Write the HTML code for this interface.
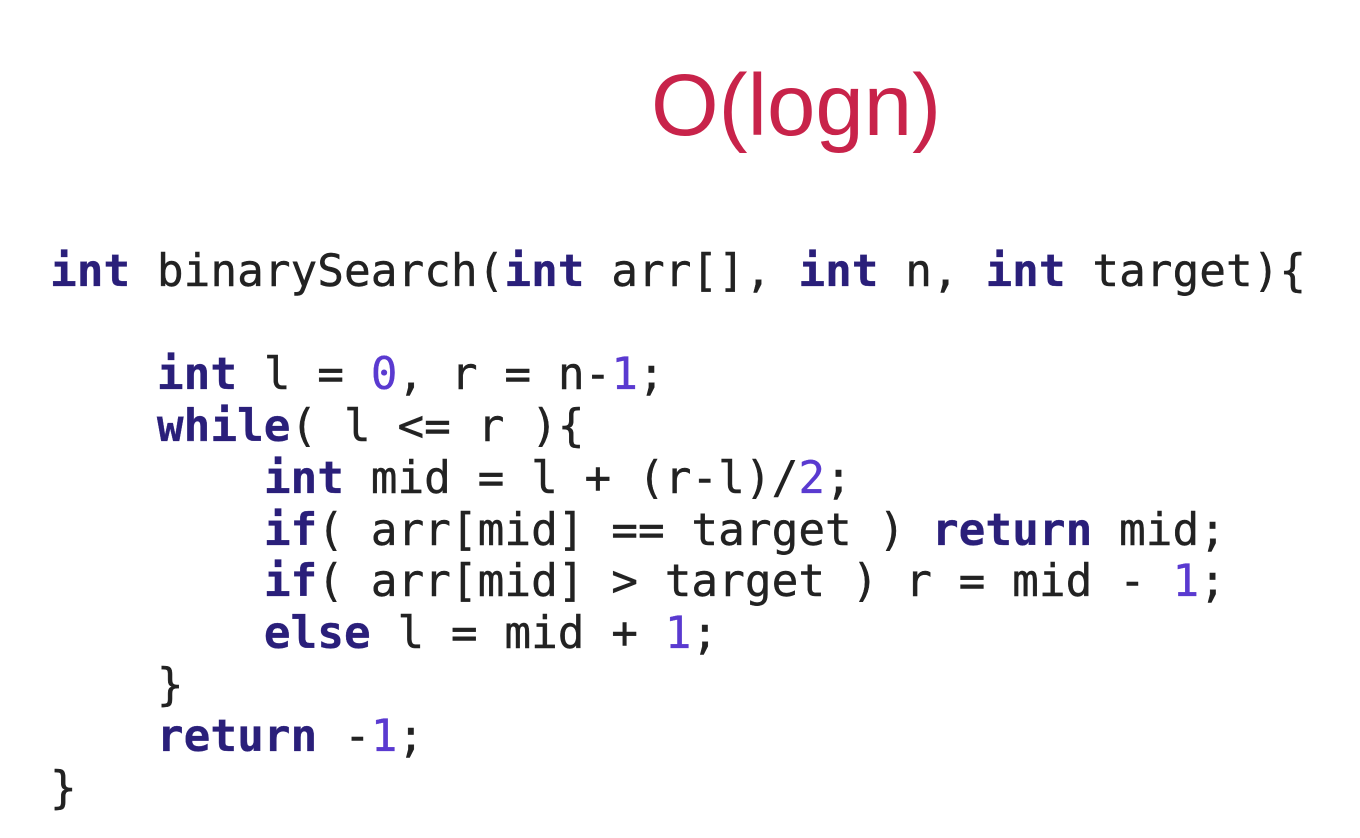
<!DOCTYPE html>
<html><head><meta charset="utf-8"><style>
html,body{margin:0;padding:0;background:#fff;width:1360px;height:838px;overflow:hidden}
.t{position:absolute;left:651px;top:62px;font-family:"Liberation Sans",sans-serif;font-size:87px;line-height:1;color:#c8234a;white-space:nowrap}
pre{position:absolute;left:50px;top:246px;margin:0;font-family:"DejaVu Sans Mono",monospace;font-size:44.4px;line-height:51.7px;color:#222;-webkit-text-stroke:0.4px #222}
b{color:#2a1f7a;-webkit-text-stroke:0.3px #2a1f7a}
i{font-style:normal;color:#5a3ad0;-webkit-text-stroke:0.3px #5a3ad0}
</style></head><body>
<div class="t">O(logn)</div>
<pre><b>int</b> binarySearch(<b>int</b> arr[], <b>int</b> n, <b>int</b> target){

    <b>int</b> l = <i>0</i>, r = n-<i>1</i>;
    <b>while</b>( l &lt;= r ){
        <b>int</b> mid = l + (r-l)/<i>2</i>;
        <b>if</b>( arr[mid] == target ) <b>return</b> mid;
        <b>if</b>( arr[mid] &gt; target ) r = mid - <i>1</i>;
        <b>else</b> l = mid + <i>1</i>;
    }
    <b>return</b> -<i>1</i>;
}</pre>
</body></html>
